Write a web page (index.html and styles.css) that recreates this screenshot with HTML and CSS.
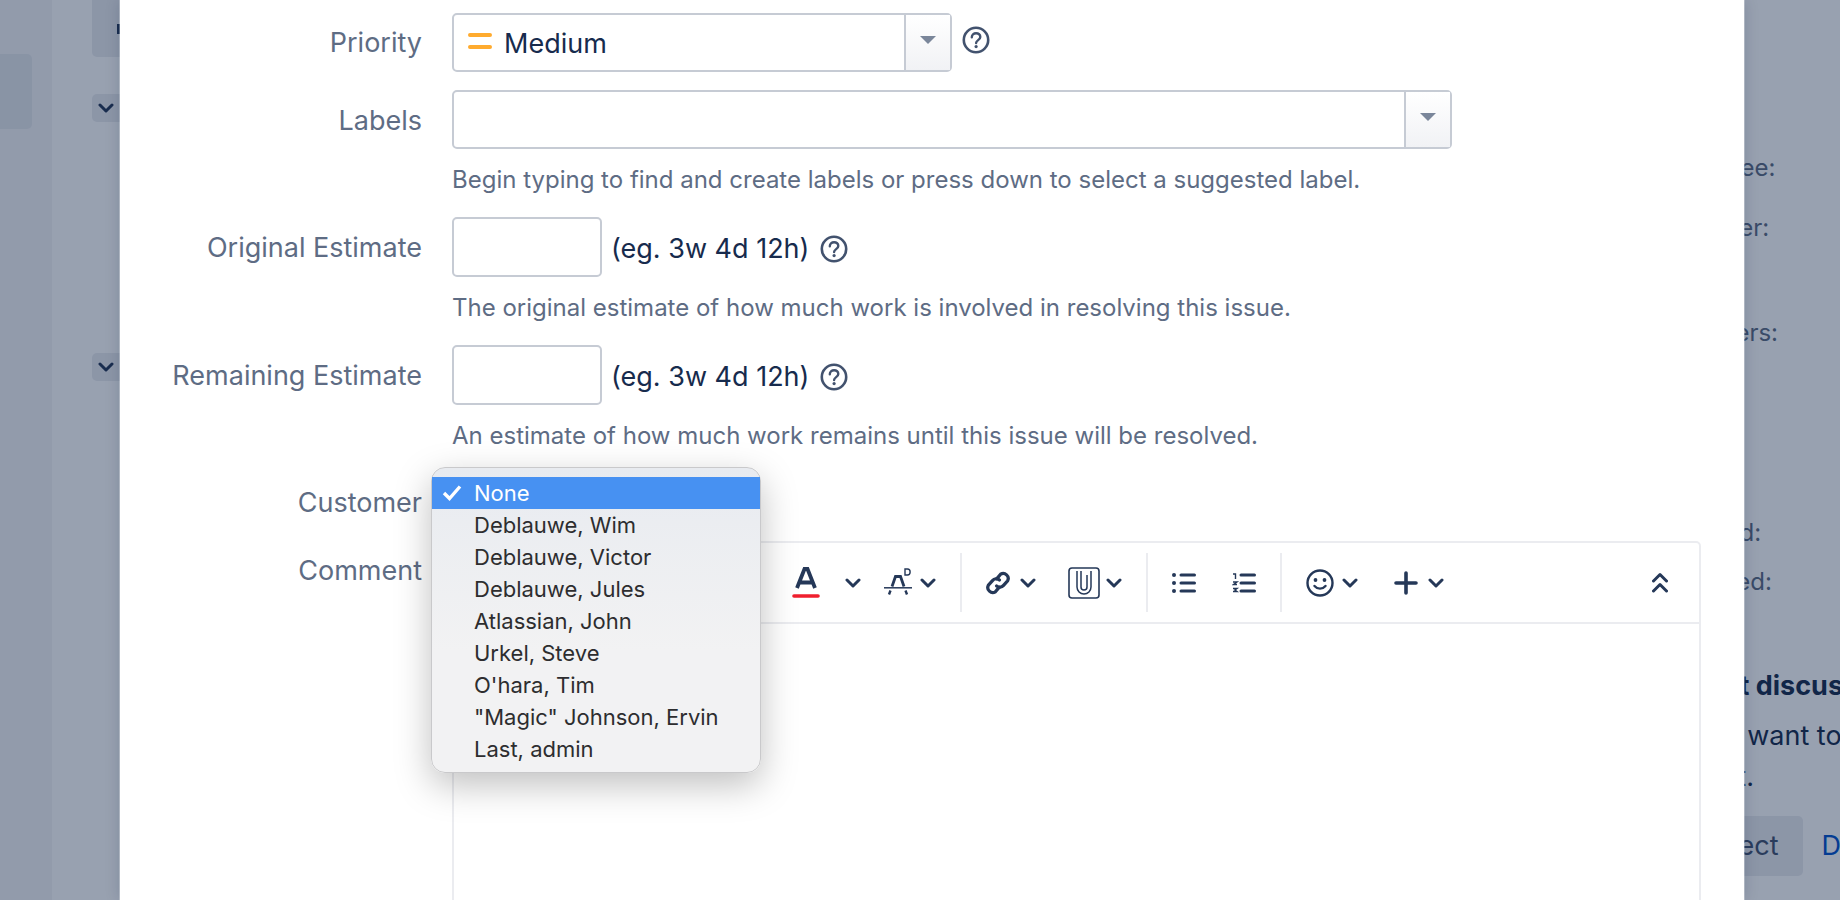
FILE: index.html
```html
<!DOCTYPE html>
<html lang="en">
<head>
    <meta charset="UTF-8">
    <title>Create issue</title>
    <link rel="stylesheet" href="styles.css">
</head>
<body>

<svg class="icon-defs" width="0" height="0">
    <symbol id="chevron" viewBox="0 0 16 10">
        <path d="M2 2l6 6 6-6" fill="none" stroke="currentColor" stroke-width="3" stroke-linecap="round" stroke-linejoin="round"/>
    </symbol>
    <symbol id="help" viewBox="0 0 28 28">
        <circle cx="14" cy="14" r="12.2" fill="none" stroke="currentColor" stroke-width="2.6"/>
        <path d="M9.800 11.200c0-2.400 1.900-4 4.300-4s4.200 1.500 4.200 3.700c0 3.200-4.200 3.200-4.200 6.200" fill="none" stroke="currentColor" stroke-width="2.400" stroke-linecap="round"/>
        <circle cx="14.100" cy="20.600" r="1.600" fill="currentColor"/>
    </symbol>
</svg>

<div class="page">
    <aside class="sidebar">
        <div class="sidebar-item"></div>
    </aside>
    <main class="content">
        <div class="back-button"><span class="back-glyph"></span></div>
        <div class="toggle toggle-first"><svg class="toggle-icon"><use href="#chevron"/></svg></div>
        <div class="toggle toggle-second"><svg class="toggle-icon"><use href="#chevron"/></svg></div>
    </main>
    <section class="details">
        <div class="detail detail-assignee">Assignee:</div>
        <div class="detail detail-reporter">Reporter:</div>
        <div class="detail detail-watchers">Watchers:</div>
        <div class="detail detail-created">Created:</div>
        <div class="detail detail-updated">Updated:</div>
        <div class="promo-title">Agent discussions</div>
        <div class="promo-text">If you want to start</div>
        <div class="promo-text">a chat.</div>
        <div class="promo-actions">
            <span class="promo-button">Select</span>
            <span class="promo-link">Dismiss</span>
        </div>
    </section>
</div>

<div class="blanket"></div>

<div class="modal">
    <div class="row">
        <label class="row-label">Priority</label>
        <div class="row-field row-inline">
            <div class="select select-priority">
                <span class="select-value">
                    <svg class="priority-icon" viewBox="0 0 24 16"><path d="M2 2h20M2 14h20" stroke="#ffab2e" stroke-width="4" stroke-linecap="round"/></svg>
                    Medium
                </span>
                <span class="select-arrow"></span>
            </div>
            <svg class="help-icon help-priority"><use href="#help"/></svg>
        </div>
    </div>

    <div class="row">
        <label class="row-label row-label-low">Labels</label>
        <div class="row-field">
            <div class="select select-labels">
                <span class="select-value"></span>
                <span class="select-arrow"></span>
            </div>
            <div class="hint">Begin typing to find and create labels or press down to select a suggested label.</div>
        </div>
    </div>

    <div class="row">
        <label class="row-label row-label-low">Original Estimate</label>
        <div class="row-field">
            <div class="row-inline">
                <div class="text-input"></div>
                <span class="input-note">(eg. 3w 4d 12h)</span>
                <svg class="help-icon"><use href="#help"/></svg>
            </div>
            <div class="hint">The original estimate of how much work is involved in resolving this issue.</div>
        </div>
    </div>

    <div class="row">
        <label class="row-label row-label-low">Remaining Estimate</label>
        <div class="row-field">
            <div class="row-inline">
                <div class="text-input"></div>
                <span class="input-note">(eg. 3w 4d 12h)</span>
                <svg class="help-icon"><use href="#help"/></svg>
            </div>
            <div class="hint">An estimate of how much work remains until this issue will be resolved.</div>
        </div>
    </div>

    <div class="row row-customer">
        <label class="row-label">Customer</label>
        <div class="row-field customer-field">
            <ul class="dropdown">
                <li class="dropdown-item selected">
                    <svg class="check" viewBox="0 0 20 16"><path d="M2 8.500l5.500 5.500L18 2" fill="none" stroke="#fff" stroke-width="3.400"/></svg>
                    None
                </li>
                <li class="dropdown-item">Deblauwe, Wim</li>
                <li class="dropdown-item">Deblauwe, Victor</li>
                <li class="dropdown-item">Deblauwe, Jules</li>
                <li class="dropdown-item">Atlassian, John</li>
                <li class="dropdown-item">Urkel, Steve</li>
                <li class="dropdown-item">O'hara, Tim</li>
                <li class="dropdown-item">"Magic" Johnson, Ervin</li>
                <li class="dropdown-item">Last, admin</li>
            </ul>
        </div>
    </div>

    <div class="row">
        <label class="row-label">Comment</label>
        <div class="row-field">
            <div class="editor">
                <div class="toolbar">
                    <div class="tool tool-color">
                        <svg class="ico" width="28" height="34" viewBox="0 0 28 34">
                            <path d="M5 22L12.500 3h3L23 22M8 16.500h12" fill="none" stroke="currentColor" stroke-width="3.800"/>
                            <path d="M2 30h24" stroke="#f01f2e" stroke-width="3.600" stroke-linecap="round"/>
                        </svg>
                        <svg class="chev"><use href="#chevron"/></svg>
                    </div>
                    <div class="tool tool-strike">
                        <svg class="ico" width="28" height="30" viewBox="0 0 28 30">
                            <path d="M8 18.500l3.500-10h5l3.500 10" fill="none" stroke="currentColor" stroke-width="2.800"/>
                            <path d="M0 19.800h28" stroke="currentColor" stroke-width="1.500"/>
                            <path d="M5 26.500l1.500-4M21.500 22.500l1.500 4" fill="none" stroke="currentColor" stroke-width="2.400"/>
                            <path d="M21 1h2.500c3.500 0 3.500 6 0 6H21z" fill="none" stroke="currentColor" stroke-width="1.400"/>
                        </svg>
                        <svg class="chev"><use href="#chevron"/></svg>
                    </div>
                    <span class="tool-sep"></span>
                    <div class="tool tool-link">
                        <svg class="ico" width="26" height="26" viewBox="0 0 24 24">
                            <path d="M10.800 8.200l3.600-4.300a4.600 4.600 0 0 1 6.500 6l-3.800 4.300a4.600 4.600 0 0 1-6.400.600" fill="none" stroke="currentColor" stroke-width="3" stroke-linecap="round"/>
                            <path d="M13.200 15.800l-3.600 4.300a4.600 4.600 0 0 1-6.500-6l3.800-4.300a4.600 4.600 0 0 1 6.400-.600" fill="none" stroke="currentColor" stroke-width="3" stroke-linecap="round"/>
                        </svg>
                        <svg class="chev"><use href="#chevron"/></svg>
                    </div>
                    <div class="tool tool-attach">
                        <svg class="ico" width="32" height="32" viewBox="0 0 32 32">
                            <rect x="1" y="1" width="30" height="30" rx="3" fill="none" stroke="currentColor" stroke-width="1.600"/>
                            <path d="M9 4v16a7 7 0 0 0 14 0V4" fill="none" stroke="currentColor" stroke-width="1.500"/>
                            <path d="M13 4v16a3 3 0 0 0 6 0V8" fill="none" stroke="currentColor" stroke-width="1.500"/>
                        </svg>
                        <svg class="chev"><use href="#chevron"/></svg>
                    </div>
                    <span class="tool-sep"></span>
                    <div class="tool tool-list">
                        <svg class="ico" width="24" height="20" viewBox="0 0 24 20">
                            <circle cx="2" cy="2" r="2" fill="currentColor"/>
                            <circle cx="2" cy="10" r="2" fill="currentColor"/>
                            <circle cx="2" cy="18" r="2" fill="currentColor"/>
                            <path d="M9 2h13.500M9 10h13.500M9 18h13.500" stroke="currentColor" stroke-width="3" stroke-linecap="round"/>
                        </svg>
                    </div>
                    <div class="tool tool-numbers">
                        <svg class="ico" width="24" height="20" viewBox="0 0 24 20">
                            <path d="M1 1h2.500v5M1 9h4l-3.500 2.500H5M1 15.500h4l-2 1.500 2 1.500H1" fill="none" stroke="currentColor" stroke-width="1.400"/>
                            <path d="M9 2h13.500M9 10h13.500M9 18h13.500" stroke="currentColor" stroke-width="3" stroke-linecap="round"/>
                        </svg>
                    </div>
                    <span class="tool-sep"></span>
                    <div class="tool tool-emoji">
                        <svg class="ico" width="28" height="28" viewBox="0 0 28 28">
                            <circle cx="14" cy="14" r="12.500" fill="none" stroke="currentColor" stroke-width="2.400"/>
                            <circle cx="9.500" cy="11" r="1.900" fill="currentColor"/>
                            <circle cx="18.500" cy="11" r="1.900" fill="currentColor"/>
                            <path d="M8.500 17c3 3.500 8 3.500 11 0" fill="none" stroke="currentColor" stroke-width="2.400" stroke-linecap="round"/>
                        </svg>
                        <svg class="chev"><use href="#chevron"/></svg>
                    </div>
                    <div class="tool tool-plus">
                        <svg class="ico" width="24" height="24" viewBox="0 0 24 24">
                            <path d="M2 12h20M12 2v20" stroke="currentColor" stroke-width="3.600" stroke-linecap="round"/>
                        </svg>
                        <svg class="chev"><use href="#chevron"/></svg>
                    </div>
                    <svg class="collapse" width="16" height="23" viewBox="0 0 16 23">
                        <path d="M1.500 10L8 3.500l6.500 6.500M1.500 20L8 13.500l6.500 6.500" fill="none" stroke="currentColor" stroke-width="3" stroke-linecap="round" stroke-linejoin="round"/>
                    </svg>
                </div>
                <div class="editor-body"></div>
            </div>
        </div>
    </div>
</div>

</body>
</html>
```

FILE: styles.css
```css
html, body {
    margin: 0;
    padding: 0;
    height: 900px;
    overflow: hidden;
}

body {
    position: relative;
    font-family: Inter, "Liberation Sans", sans-serif;
    background-color: #fff;
    color: #172b4d;
}

.icon-defs {
    position: absolute;
}

/* page behind the dialog */

.page {
    display: flex;
    height: 900px;
}

.sidebar {
    width: 52px;
    flex-shrink: 0;
    background-color: #f4f5f7;
}

.sidebar-item {
    width: 32px;
    height: 75px;
    margin-top: 54px;
    background-color: #e6e8ed;
    border-radius: 0 5px 5px 0;
}

.content {
    flex: 1;
    padding-left: 40px;
}

.back-button {
    display: flex;
    align-items: center;
    width: 60px;
    height: 57px;
    background-color: #ebecf0;
    border-radius: 0 0 5px 5px;
}

.back-glyph {
    width: 8px;
    height: 10px;
    margin-left: 25px;
    background-color: #253858;
}

.toggle {
    display: flex;
    align-items: center;
    width: 40px;
    height: 28px;
    background-color: #ebecf0;
    border-radius: 5px;
    color: #253858;
}

.toggle-first {
    margin-top: 37px;
}

.toggle-second {
    margin-top: 231px;
}

.toggle-icon {
    width: 16px;
    height: 10px;
    margin-left: 6px;
}

.details {
    width: 176px;
    flex-shrink: 0;
    overflow: hidden;
    font-size: 24px;
    line-height: 30px;
    white-space: nowrap;
}

.detail {
    color: #5e6c84;
}

.detail-assignee {
    margin-top: 153px;
}

.detail-reporter {
    margin-top: 30px;
}

.detail-watchers {
    margin-top: 75px;
}

.detail-created {
    margin-top: 170px;
}

.detail-updated {
    margin-top: 19px;
    padding-left: 4px;
}

.promo-title {
    margin-top: 74px;
    padding-left: 6px;
    font-size: 27px;
    font-weight: 700;
}

.promo-text {
    margin-top: 20px;
    padding-left: 4px;
    font-size: 27px;
}

.promo-text + .promo-text {
    margin-top: 11px;
}

.promo-actions {
    display: flex;
    align-items: center;
    margin-top: 24px;
    margin-left: 11px;
    gap: 19px;
    font-size: 27px;
}

.promo-button {
    padding: 15px 24px;
    background-color: #ebecf0;
    border-radius: 5px;
    color: #42526e;
}

.promo-link {
    color: #0052cc;
}

.blanket {
    position: absolute;
    inset: 0;
    background-color: rgba(9, 30, 66, 0.42);
}

/* dialog */

.modal {
    position: absolute;
    top: 0;
    left: 120px;
    box-sizing: border-box;
    width: 1624px;
    height: 900px;
    padding-top: 13px;
    overflow: hidden;
    background-color: #fff;
    box-shadow: 0 0 0 1px rgba(255, 255, 255, 0.3), 0 0 14px rgba(9, 30, 66, 0.18);
}

.row {
    display: flex;
    margin-bottom: 18px;
}

.row-label {
    width: 302px;
    height: 59px;
    flex-shrink: 0;
    margin-right: 30px;
    font-size: 27px;
    line-height: 60px;
    text-align: right;
    color: #5e6c84;
}

.row-label-low {
    line-height: 62px;
}

.row-field {
    flex: 1;
}

.row-inline {
    display: flex;
    align-items: center;
}

.select {
    display: flex;
    box-sizing: border-box;
    height: 59px;
    border: 2px solid #c6cbd4;
    border-radius: 5px;
    background-color: #fff;
}

.select-priority {
    width: 500px;
}

.select-labels {
    width: 1000px;
}

.select-value {
    display: flex;
    flex: 1;
    align-items: center;
    gap: 12px;
    padding: 2px 0 0 14px;
    font-size: 27px;
    color: #172b4d;
}

.priority-icon {
    width: 24px;
    height: 16px;
    margin-top: -5px;
}

.select-arrow {
    position: relative;
    width: 44px;
    border-left: 2px solid #c6cbd4;
    background: linear-gradient(#fff, #f1f2f5);
}

.select-arrow::after {
    content: "";
    position: absolute;
    top: 21px;
    left: 14px;
    border-top: 8px solid #7a869a;
    border-left: 8px solid transparent;
    border-right: 8px solid transparent;
}

.help-icon {
    width: 28px;
    height: 28px;
    margin-top: 3px;
    margin-left: 11px;
    color: #42526e;
}

.help-priority {
    margin-top: -5px;
    margin-left: 10px;
}

.text-input {
    box-sizing: border-box;
    width: 150px;
    height: 60px;
    border: 2px solid #c6cbd4;
    border-radius: 5px;
}

.input-note {
    margin-left: 9px;
    padding-top: 2px;
    font-size: 27px;
    color: #172b4d;
}

.hint {
    height: 34px;
    padding-top: 16px;
    font-size: 24px;
    line-height: 30px;
    color: #5e6c84;
}

.row-customer {
    margin-bottom: 9px;
}

.customer-field {
    position: relative;
    height: 59px;
}

.dropdown {
    position: absolute;
    z-index: 2;
    top: -6px;
    left: -21px;
    box-sizing: border-box;
    width: 330px;
    height: 306px;
    margin: 0;
    padding: 9px 0 8px;
    list-style: none;
    background: linear-gradient(#e8ebf0, #f2f2f3 60%);
    border: 1px solid #c9c9cb;
    border-radius: 14px;
    box-shadow: 0 12px 36px rgba(0, 0, 0, 0.25);
    font-size: 22px;
    line-height: 32px;
    color: #2d2d2f;
}

.dropdown-item {
    position: relative;
    height: 32px;
    padding-left: 42px;
}

.dropdown-item.selected {
    background-color: #4791f2;
    color: #fff;
}

.check {
    position: absolute;
    top: 7px;
    left: 10px;
    width: 20px;
    height: 17px;
}

.editor {
    box-sizing: border-box;
    width: 1249px;
    height: 500px;
    border: 2px solid #ebecf0;
    border-radius: 5px;
}

.toolbar {
    display: flex;
    align-items: center;
    height: 79px;
    padding: 0 31px 0 338px;
    border-bottom: 2px solid #ebecf0;
    color: #253858;
}

.tool {
    display: flex;
    align-items: center;
    gap: 8px;
}

.tool-color {
    gap: 25px;
}

.tool-strike {
    margin-left: 23px;
}

.tool-link {
    gap: 9px;
    margin-left: -1px;
}

.tool-attach {
    gap: 6px;
    margin-left: 32px;
}

.tool-numbers {
    margin-left: 36px;
}

.tool-plus {
    gap: 10px;
    margin-left: 36px;
}

.chev {
    width: 16px;
    height: 10px;
}

.tool-sep {
    width: 2px;
    height: 59px;
    margin: 0 24px;
    background-color: #ebecf0;
}

.collapse {
    margin-left: auto;
}

.editor-body {
    height: 400px;
}
```
